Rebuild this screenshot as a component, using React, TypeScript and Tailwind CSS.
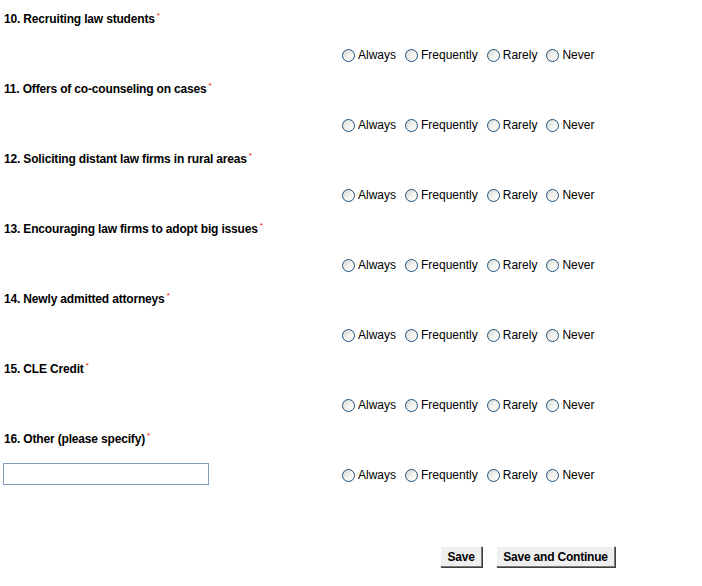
const questions = [
  "10. Recruiting law students",
  "11. Offers of co-counseling on cases",
  "12. Soliciting distant law firms in rural areas",
  "13. Encouraging law firms to adopt big issues",
  "14. Newly admitted attorneys",
  "15. CLE Credit",
  "16. Other (please specify)",
];

const choices = ["Always", "Frequently", "Rarely", "Never"];

function Radio() {
  return (
    <span className="w-[13px] h-[13px] rounded-full border border-[#1c5180] bg-gradient-to-br from-[#d6d6d0] via-[#f2f2ee] to-white shrink-0" />
  );
}

function Question({ label, other }: { label: string; other?: boolean }) {
  return (
    <div className="h-[70px] flex flex-col">
      <div className="h-[14px] leading-[14px] pl-[4px] font-bold text-[12px] tracking-[-0.17px] text-black flex items-start">
        {label}
        <span className="text-[#ff0000] text-[8px] leading-[8px] ml-[2px] font-normal">*</span>
      </div>
      <div className="mt-[18px] h-[22px] flex items-center">
        <div className="w-[342px] flex items-center">
          {other && (
            <input
              type="text"
              className="relative -top-[1px] ml-[3px] w-[206px] h-[22px] border border-[#7f9db9] bg-white outline-none"
            />
          )}
        </div>
        <div className="flex items-center">
          {choices.map((c) => (
            <label key={c} className="flex items-center mr-[9px]">
              <Radio />
              <span className="ml-[3px] text-[12px] leading-[14px] text-black">{c}</span>
            </label>
          ))}
        </div>
      </div>
    </div>
  );
}

export default function App() {
  return (
    <div className="w-[702px] h-[586px] bg-white pt-[12px] font-['Liberation_Sans',Arial,sans-serif]">
      {questions.map((q, i) => (
        <Question key={q} label={q} other={i === questions.length - 1} />
      ))}
      <div className="mt-[44px] pl-[440px] flex gap-[14px]">
        <button className="h-[21px] w-[42px] bg-[#efefef] border border-t-white border-l-white border-b-[#7a7a7a] border-r-[#7a7a7a] shadow-[1px_1px_0_#404040] text-[12px] font-bold tracking-[-0.2px] text-black leading-none">
          Save
        </button>
        <button className="h-[21px] w-[119px] bg-[#efefef] border border-t-white border-l-white border-b-[#7a7a7a] border-r-[#7a7a7a] shadow-[1px_1px_0_#404040] text-[12px] font-bold tracking-[-0.2px] text-black leading-none">
          Save and Continue
        </button>
      </div>
    </div>
  );
}
